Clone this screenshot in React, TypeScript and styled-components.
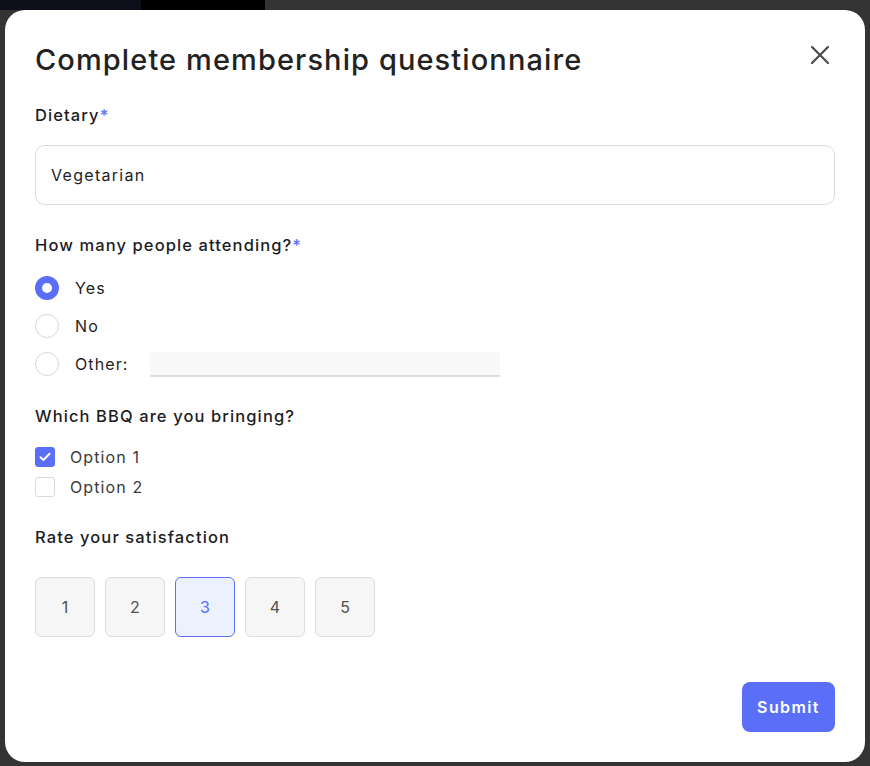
import { useState } from "react";
import styled, { createGlobalStyle } from "styled-components";

const GlobalStyle = createGlobalStyle`
  html, body {
    margin: 0;
    padding: 0;
    height: 100%;
  }
  body {
    font-family: "Inter", "Noto Sans", sans-serif;
    background: #333333;
    color: #1d1d1f;
  }
  * {
    box-sizing: border-box;
  }
`;

const ACCENT = "#5a6ef8";

const Backdrop = styled.div`
  width: 870px;
  height: 766px;
  padding: 10px 5px 4px 5px;
  background: linear-gradient(90deg, #0d0f1a 0, #0d0f1a 141px, #000 141px, #000 265px, #333 265px);
  background-size: 100% 10px;
  background-repeat: no-repeat;
  background-color: #333;
`;

const Modal = styled.div`
  width: 860px;
  height: 752px;
  background: #fff;
  border-radius: 20px;
  padding: 28px 30px 30px 30px;
  display: flex;
  flex-direction: column;
  letter-spacing: 1.1px;
`;

const Header = styled.div`
  display: flex;
  align-items: flex-start;
  justify-content: space-between;
`;

const Title = styled.h1`
  margin: 0;
  font-size: 29px;
  font-weight: 500;
  line-height: 44px;
  letter-spacing: 1.1px;
  color: #222;
`;

const CloseButton = styled.button`
  border: none;
  background: none;
  padding: 0;
  margin-top: 2px;
  margin-right: 0;
  width: 30px;
  height: 30px;
  display: flex;
  align-items: center;
  justify-content: center;
  cursor: pointer;
`;

const Field = styled.div<{ $top: number }>`
  margin-top: ${({ $top }) => $top}px;
  display: flex;
  flex-direction: column;
`;

const Label = styled.label`
  font-size: 16.5px;
  font-weight: 500;
  line-height: 24px;
  letter-spacing: 1.1px;
  color: #1d1d1f;
`;

const Required = styled.span`
  color: ${ACCENT};
`;

const TextInput = styled.input`
  margin-top: 18px;
  height: 60px;
  border: 1px solid #dcdcdc;
  border-radius: 10px;
  padding: 0 15px;
  font-family: inherit;
  font-size: 16px;
  letter-spacing: 1.3px;
  color: #1d1d1f;
  outline: none;
`;

const OptionList = styled.div<{ $gap: number; $top: number }>`
  display: flex;
  flex-direction: column;
  gap: ${({ $gap }) => $gap}px;
  margin-top: ${({ $top }) => $top}px;
`;

const OptionRow = styled.label`
  display: flex;
  align-items: center;
  height: 24px;
  font-size: 16px;
  color: #1d1d1f;
  cursor: pointer;
`;

const Radio = styled.span<{ $checked: boolean }>`
  width: 24px;
  height: 24px;
  border-radius: 50%;
  flex-shrink: 0;
  margin-right: 16px;
  border: ${({ $checked }) => ($checked ? `7px solid ${ACCENT}` : "1px solid #d6d6d6")};
  background: #fff;
`;

const OtherInput = styled.input`
  margin-left: 21px;
  width: 350px;
  height: 25px;
  border: none;
  border-bottom: 2px solid #dedede;
  background: #f9f9f9;
  outline: none;
  font-family: inherit;
  font-size: 14px;
`;

const CheckRow = styled(OptionRow)`
  height: 20px;
  color: #3a3a3c;
`;

const Checkbox = styled.span<{ $checked: boolean }>`
  width: 20px;
  height: 20px;
  border-radius: 3px;
  flex-shrink: 0;
  margin-right: 15px;
  display: flex;
  align-items: center;
  justify-content: center;
  background: ${({ $checked }) => ($checked ? ACCENT : "#fff")};
  border: 1px solid ${({ $checked }) => ($checked ? ACCENT : "#dadada")};
`;

const RatingRow = styled.div`
  display: flex;
  gap: 10px;
  margin-top: 28px;
`;

const RatingButton = styled.button<{ $active: boolean }>`
  width: 60px;
  height: 60px;
  border-radius: 6px;
  border: 1px solid ${({ $active }) => ($active ? ACCENT : "#dcdcdc")};
  background: ${({ $active }) => ($active ? "#edf1fd" : "#f6f6f6")};
  color: ${({ $active }) => ($active ? ACCENT : "#505050")};
  font-family: inherit;
  font-size: 16px;
  cursor: pointer;
`;

const Footer = styled.div`
  margin-top: auto;
  display: flex;
  justify-content: flex-end;
`;

const SubmitButton = styled.button`
  width: 93px;
  height: 50px;
  border: none;
  border-radius: 8px;
  background: ${ACCENT};
  color: #fff;
  font-family: inherit;
  font-size: 16px;
  font-weight: 600;
  letter-spacing: 1.4px;
  cursor: pointer;
`;

const CloseIcon = () => (
  <svg width="20" height="20" viewBox="0 0 20 20" fill="none">
    <path d="M2 2L18 18M18 2L2 18" stroke="#4a4a4a" strokeWidth="2.2" strokeLinecap="round" />
  </svg>
);

const CheckIcon = () => (
  <svg width="12" height="10" viewBox="0 0 12 10" fill="none">
    <path d="M1.5 5.2L4.5 8L10.5 1.8" stroke="#fff" strokeWidth="2" strokeLinecap="round" strokeLinejoin="round" />
  </svg>
);

const radioOptions = ["Yes", "No", "Other:"];
const bbqOptions = ["Option 1", "Option 2"];

export default function App() {
  const [attending, setAttending] = useState("Yes");
  const [bbq, setBbq] = useState<string[]>(["Option 1"]);
  const [rating, setRating] = useState(3);

  const toggleBbq = (opt: string) =>
    setBbq((prev) => (prev.includes(opt) ? prev.filter((o) => o !== opt) : [...prev, opt]));

  return (
    <>
      <GlobalStyle />
      <Backdrop>
        <Modal>
          <Header>
            <Title>Complete membership questionnaire</Title>
            <CloseButton aria-label="Close">
              <CloseIcon />
            </CloseButton>
          </Header>

          <Field $top={21}>
            <Label>
              Dietary<Required>*</Required>
            </Label>
            <TextInput defaultValue="Vegetarian" />
          </Field>

          <Field $top={28}>
            <Label>
              How many people attending?<Required>*</Required>
            </Label>
            <OptionList $gap={14} $top={19}>
              {radioOptions.map((opt) => (
                <OptionRow key={opt} onClick={() => setAttending(opt)}>
                  <Radio $checked={attending === opt} />
                  {opt}
                  {opt === "Other:" && <OtherInput />}
                </OptionRow>
              ))}
            </OptionList>
          </Field>

          <Field $top={28}>
            <Label>Which BBQ are you bringing?</Label>
            <OptionList $gap={10} $top={19}>
              {bbqOptions.map((opt) => (
                <CheckRow key={opt} onClick={() => toggleBbq(opt)}>
                  <Checkbox $checked={bbq.includes(opt)}>{bbq.includes(opt) && <CheckIcon />}</Checkbox>
                  {opt}
                </CheckRow>
              ))}
            </OptionList>
          </Field>

          <Field $top={28}>
            <Label>Rate your satisfaction</Label>
            <RatingRow>
              {[1, 2, 3, 4, 5].map((n) => (
                <RatingButton key={n} $active={rating === n} onClick={() => setRating(n)}>
                  {n}
                </RatingButton>
              ))}
            </RatingRow>
          </Field>

          <Footer>
            <SubmitButton>Submit</SubmitButton>
          </Footer>
        </Modal>
      </Backdrop>
    </>
  );
}
